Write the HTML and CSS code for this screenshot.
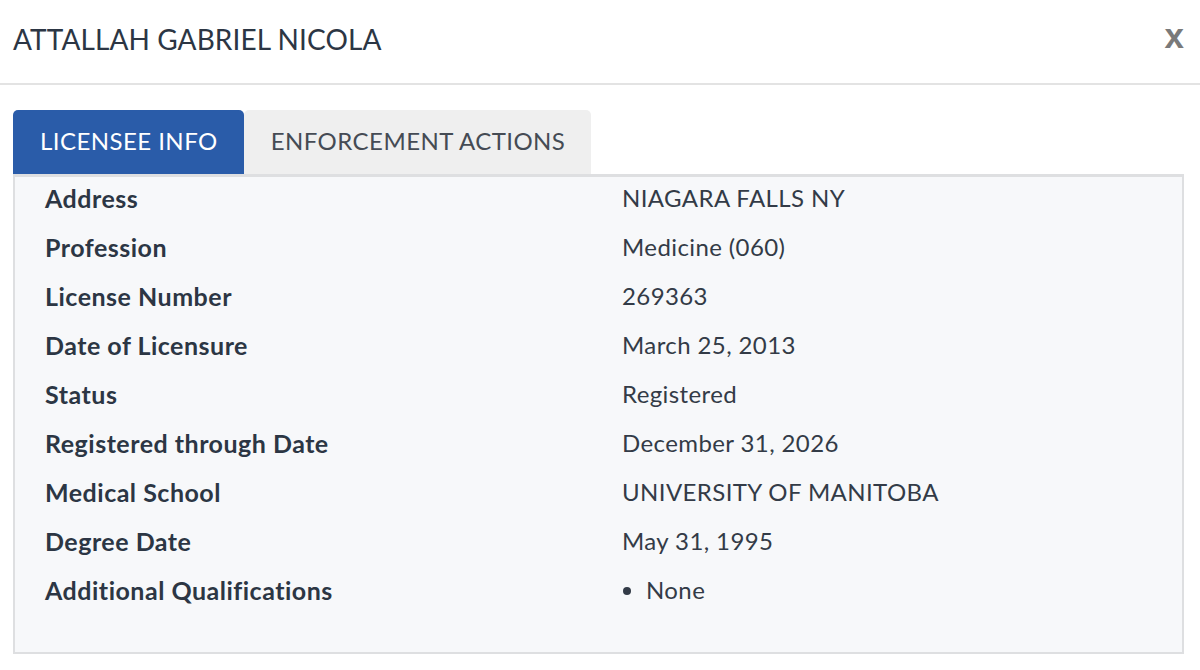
FILE: index.html
```html
<!DOCTYPE html>
<html>
<head>
<meta charset="utf-8">
<link rel="stylesheet" href="styles.css">
</head>
<body>
<div class="modal">
  <div class="header">
    <h1 class="title">ATTALLAH GABRIEL NICOLA</h1>
    <span class="close">x</span>
  </div>
  <div class="body">
    <div class="tabs">
      <div class="tab active">LICENSEE INFO</div>
      <div class="tab">ENFORCEMENT ACTIONS</div>
    </div>
    <div class="panel">
      <div class="row"><div class="label">Address</div><div class="value">NIAGARA FALLS NY</div></div>
      <div class="row"><div class="label">Profession</div><div class="value">Medicine (060)</div></div>
      <div class="row"><div class="label">License Number</div><div class="value">269363</div></div>
      <div class="row"><div class="label">Date of Licensure</div><div class="value">March 25, 2013</div></div>
      <div class="row"><div class="label">Status</div><div class="value">Registered</div></div>
      <div class="row"><div class="label">Registered through Date</div><div class="value">December 31, 2026</div></div>
      <div class="row"><div class="label">Medical School</div><div class="value">UNIVERSITY OF MANITOBA</div></div>
      <div class="row"><div class="label">Degree Date</div><div class="value">May 31, 1995</div></div>
      <div class="row"><div class="label">Additional Qualifications</div><div class="value"><ul class="list"><li>None</li></ul></div></div>
    </div>
  </div>
</div>
</body>
</html>
```
FILE: styles.css
```css
html, body {
  margin: 0;
  padding: 0;
  background: #ffffff;
}
body {
  font-family: "Lato", "Noto Sans", sans-serif;
  color: #2c3644;
}
.header {
  display: flex;
  align-items: center;
  justify-content: space-between;
  height: 77px;
  padding: 0 16px 6px 13px;
  border-bottom: 2px solid #e3e3e3;
}
.title {
  margin: 0;
  font-size: 28px;
  font-weight: 400;
  color: #2c3644;
  letter-spacing: 0.1px;
}
.close {
  font-size: 35px;
  font-weight: 700;
  color: #7a7a7a;
  font-family: "Liberation Sans", sans-serif;
  line-height: 1;
  margin-top: -6px;
}
.body {
  padding: 25px 16px 0 13px;
}
.tabs {
  display: flex;
}
.tab {
  height: 64px;
  box-sizing: border-box;
  display: flex;
  align-items: center;
  padding: 0 26px 3px 27px;
  font-size: 24px;
  letter-spacing: 0.45px;
  color: #454b54;
  background: #efefef;
  border-radius: 5px 5px 0 0;
}
.tab.active {
  background: #2a5ca9;
  color: #ffffff;
}
.panel {
  border: 2px solid #dedfe1;
  border-top-width: 3px;
  background: #f7f8fa;
  height: 475px;
  box-sizing: content-box;
  padding: 0 30px;
}
.row {
  display: grid;
  grid-template-columns: 577px 1fr;
  height: 49px;
  box-sizing: border-box;
  align-items: start;
  padding-top: 6px;
  line-height: 30px;
}
.label {
  font-size: 25px;
  font-weight: 700;
  letter-spacing: 0.5px;
  color: #2c3644;
}
.value {
  font-size: 24px;
  letter-spacing: 0.4px;
  color: #333b47;
}
.list {
  margin: 0;
  padding: 0 0 0 24px;
}
.list li {
  list-style: disc;
}
```
